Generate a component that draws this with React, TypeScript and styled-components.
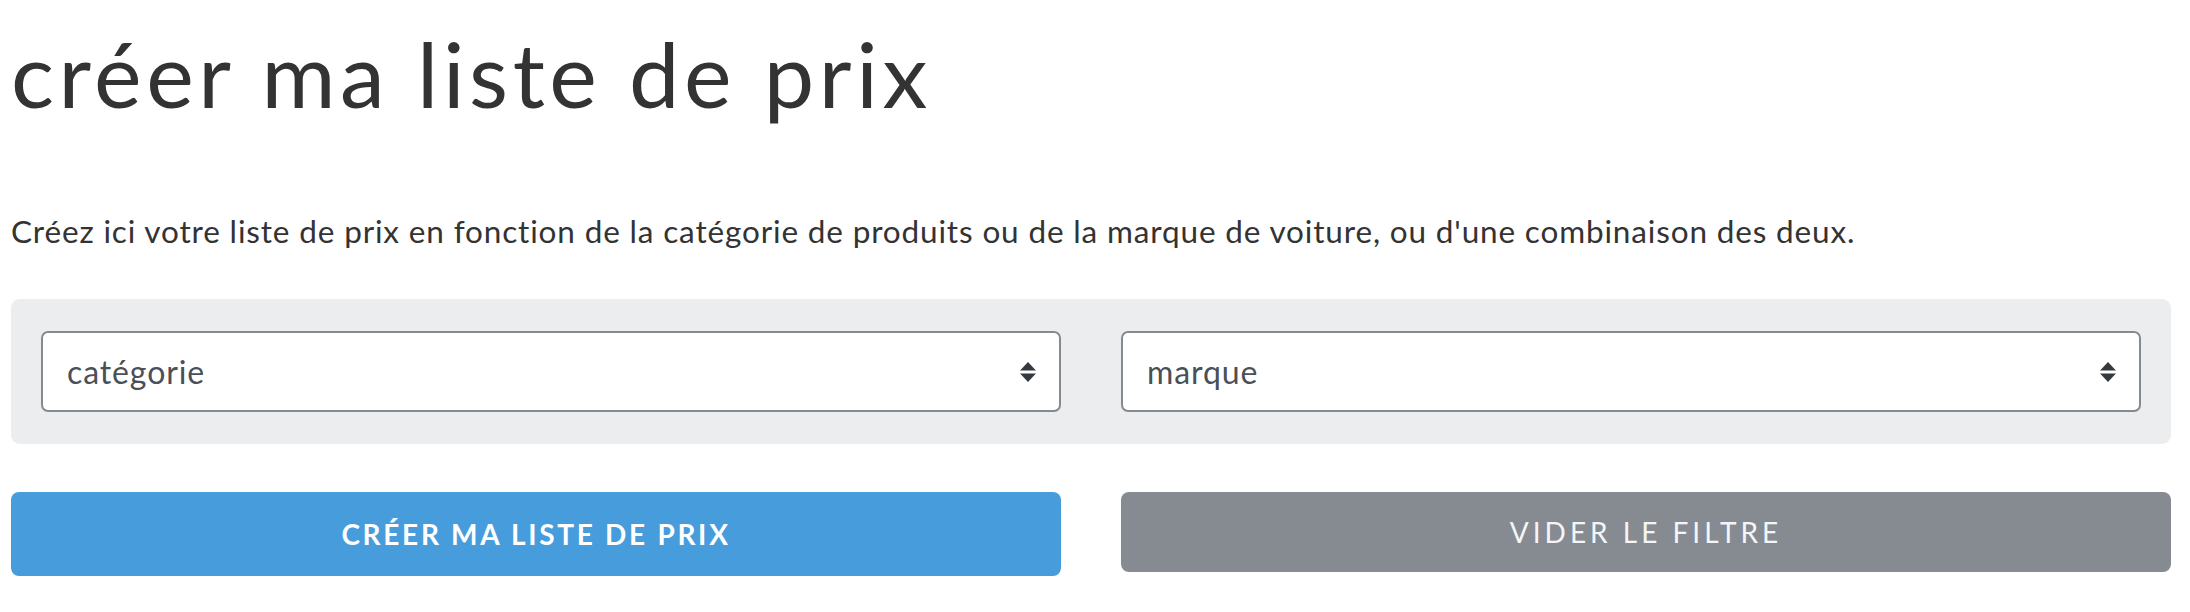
import styled, { createGlobalStyle } from 'styled-components'

const GlobalStyle = createGlobalStyle`
  body {
    margin: 0;
    background: #ffffff;
    font-family: 'Lato', 'Liberation Sans', sans-serif;
    color: #333333;
  }
`

const Page = styled.main`
  width: 2160px;
  padding: 19px 19px 0 11px;
`

const Title = styled.h1`
  margin: 0;
  font-size: 90px;
  font-weight: 400;
  line-height: 1.2;
  letter-spacing: 4.6px;
  color: #333333;
`

const Lead = styled.p`
  margin: 86px 0 0;
  font-size: 31.5px;
  line-height: 1.2;
  letter-spacing: 0.85px;
  color: #333333;
`

const FilterPanel = styled.div`
  margin-top: 48px;
  padding: 32px 30px;
  background: #ecedef;
  border-radius: 9px;
  display: grid;
  grid-template-columns: 1fr 1fr;
  gap: 60px;
`

const SelectWrap = styled.label`
  position: relative;
  display: block;

  > svg {
    position: absolute;
    right: 25px;
    top: 31px;
    pointer-events: none;
  }
`

const Select = styled.select`
  width: 100%;
  height: 81px;
  padding: 0 60px 0 24px;
  border: 2px solid #858a90;
  border-radius: 7px;
  background: #ffffff;
  font-family: 'Lato', 'Liberation Sans', sans-serif;
  font-size: 32px;
  letter-spacing: 0.9px;
  color: #495057;
  appearance: none;
  -webkit-appearance: none;
  outline: none;
`

const Actions = styled.div`
  margin-top: 48px;
  display: grid;
  grid-template-columns: 1fr 1fr;
  gap: 60px;
  align-items: start;
`

const Button = styled.button<{ $variant: 'primary' | 'secondary' }>`
  width: 100%;
  height: ${(p) => (p.$variant === 'primary' ? '84px' : '80px')};
  border: none;
  border-radius: 8px;
  background: ${(p) => (p.$variant === 'primary' ? '#479ddc' : '#868b91')};
  color: ${(p) => (p.$variant === 'primary' ? '#ffffff' : '#f4f5f6')};
  font-family: 'Lato', 'Liberation Sans', sans-serif;
  font-size: 28px;
  font-weight: ${(p) => (p.$variant === 'primary' ? 700 : 400)};
  letter-spacing: ${(p) => (p.$variant === 'primary' ? '2.7px' : '4px')};
  text-transform: uppercase;
  cursor: pointer;
`

const SortIcon = () => (
  <svg width="16" height="20" viewBox="0 0 16 20" aria-hidden="true">
    <path d="M8 0 L16 8.5 H0 Z" fill="#343a40" />
    <path d="M0 11.5 H16 L8 20 Z" fill="#343a40" />
  </svg>
)

type FilterSelectProps = {
  placeholder: string
}

const FilterSelect = ({ placeholder }: FilterSelectProps) => (
  <SelectWrap>
    <Select defaultValue="">
      <option value="">{placeholder}</option>
    </Select>
    <SortIcon />
  </SelectWrap>
)

export default function App() {
  return (
    <>
      <GlobalStyle />
      <Page>
        <Title>créer ma liste de prix</Title>
        <Lead>
          Créez ici votre liste de prix en fonction de la catégorie de produits ou de la marque de voiture, ou
          d'une combinaison des deux.
        </Lead>

        <FilterPanel>
          <FilterSelect placeholder="catégorie" />
          <FilterSelect placeholder="marque" />
        </FilterPanel>

        <Actions>
          <Button $variant="primary">Créer ma liste de prix</Button>
          <Button $variant="secondary">Vider le filtre</Button>
        </Actions>
      </Page>
    </>
  )
}
